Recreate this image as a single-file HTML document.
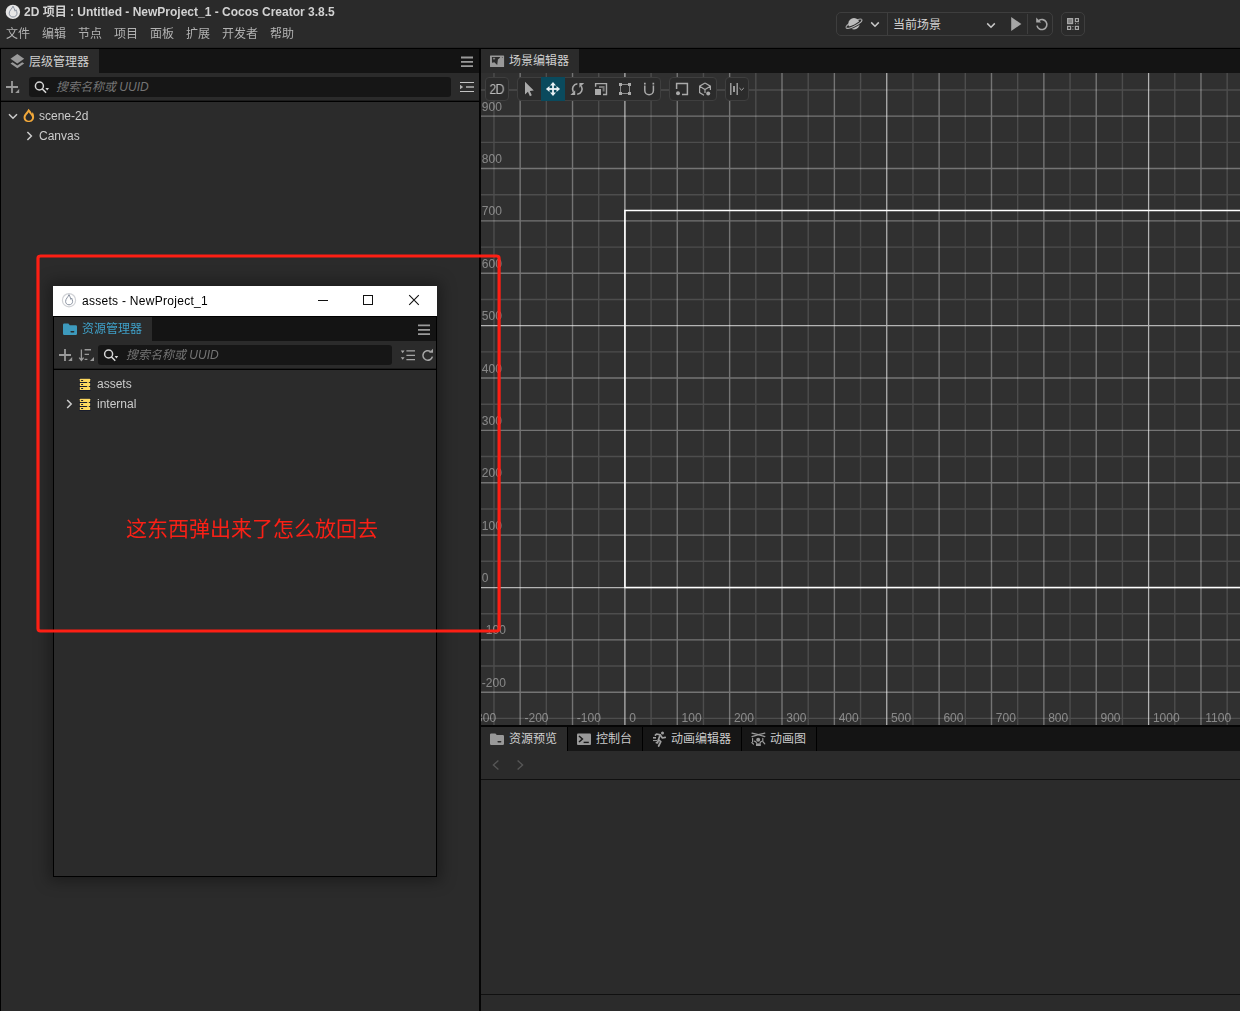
<!DOCTYPE html>
<html lang="zh-CN">
<head>
<meta charset="utf-8">
<title>Cocos Creator</title>
<style>
*{box-sizing:border-box;margin:0;padding:0}
html,body{width:1240px;height:1011px;overflow:hidden;background:#2b2b2b}
body{position:relative;font-family:"Liberation Sans","Noto Sans CJK SC",sans-serif;font-size:12px;color:#ccc}
.abs{position:absolute}
.gs{will-change:transform}
svg{display:block;position:absolute;overflow:visible}
#header{left:0;top:0;width:1240px;height:47px;background:#2a2a2a}
.hbx{top:12px;height:24px;border:1px solid #3e3e3e;border-radius:5px}
#hline{left:0;top:47px;width:1240px;height:2px;background:#000;border-top:1px solid #232323}
#title{left:24px;top:4px;font-weight:bold;font-size:12px;line-height:16px;color:#d2d2d2;white-space:nowrap}
.menu{top:26px;font-size:12px;line-height:16px;color:#b2b2b2;white-space:nowrap}
/* left panel */
#lp{left:0;top:49px;width:479px;height:962px;background:#2b2b2b;border-left:1px solid #000}
.tabbar{background:#141414;height:24px}
.tab{background:#2b2b2b;height:24px;color:#d0d0d0;white-space:nowrap;font-size:12px;line-height:24px}
.itab{top:727px;background:#161616;color:#cacaca}
.search{background:#161616;border-radius:3px;height:20px}
.ph{font-style:italic;color:#747474;font-size:12px;line-height:20px;white-space:nowrap}
.row{font-size:12px;line-height:20px;color:#ccc;white-space:nowrap}
#vdiv{left:479px;top:49px;width:2px;height:962px;background:#050505}
/* scene */
#scene{left:481px;top:73px;width:759px;height:652px;background:#303030;overflow:hidden}
.tbx{background:#2b2b2b;border:1px solid #3f3f3f;border-radius:4px;height:24px;top:77px}
#t2d{left:485px;top:77px;width:24px;height:24px;line-height:24px;text-align:center;font-size:14px;letter-spacing:-.9px;color:#b9b9b9;transform:scaleX(.9);text-indent:-1px}
#hdiv{left:481px;top:725px;width:759px;height:2px;background:#050505}
/* popup */
#win{left:53px;top:286px;width:384px;height:591px;background:#2b2b2b;border:1px solid #000;border-top:none;box-shadow:0 0 14px 4px rgba(0,0,0,.35)}
#wtitle{left:0;top:0;width:384px;height:30px;background:#fff;margin-left:-1px}
#anno{left:126px;top:514px;font-size:21px;line-height:30px;color:#fa2016;white-space:nowrap}
</style>
</head>
<body>
<div id="header" class="abs"></div>
<div id="hline" class="abs"></div>
<div id="title" class="abs gs">2D 项目 : Untitled - NewProject_1 - Cocos Creator 3.8.5</div>
<div class="abs menu gs" style="left:6px">文件</div>
<div class="abs menu gs" style="left:42px">编辑</div>
<div class="abs menu gs" style="left:78px">节点</div>
<div class="abs menu gs" style="left:114px">项目</div>
<div class="abs menu gs" style="left:150px">面板</div>
<div class="abs menu gs" style="left:186px">扩展</div>
<div class="abs menu gs" style="left:222px">开发者</div>
<div class="abs menu gs" style="left:270px">帮助</div>


<!-- HEADER PREVIEW GROUP -->
<div class="abs hbx" style="left:836px;width:217px"></div>
<div class="abs" style="left:887px;top:13px;width:1px;height:22px;background:#3e3e3e"></div>
<div class="abs" style="left:1027px;top:14px;width:1px;height:20px;background:#3e3e3e"></div>
<div class="abs hbx" style="left:1061px;width:24px"></div>
<div class="abs" style="left:893px;top:17px;font-size:12px;line-height:16px;color:#d4d4d4;white-space:nowrap">当前场景</div>

<!-- LEFT PANEL -->
<div id="lp" class="abs">
  <div class="abs tabbar" style="left:0;top:0;width:478px"></div>
  <div class="abs tab" style="left:0;top:0;width:98px;padding-left:28px;line-height:26px">层级管理器</div>
  <div class="abs search" style="left:28px;top:28px;width:422px"></div>
  <div class="abs ph" style="left:55px;top:28px">搜索名称或 UUID</div>
  <div class="abs" style="left:0;top:51px;width:478px;height:2px;background:#000;border-top:1px solid #1c1c1c"></div>
  <div class="abs row gs" style="left:38px;top:57px">scene-2d</div>
  <div class="abs row gs" style="left:38px;top:77px">Canvas</div>
</div>
<div id="vdiv" class="abs"></div>

<!-- SCENE PANEL -->
<div class="abs tabbar" style="left:481px;top:49px;width:759px"></div>
<div class="abs tab" style="left:481px;top:49px;width:98px;padding-left:28px">场景编辑器</div>
<div id="scene" class="abs">
<!--GRIDSTART--><svg id="grid" width="759" height="652" viewBox="0 0 759 652" style="left:0;top:0;will-change:transform">
<path d="M12.97 0V652M65.34 0V652M117.71 0V652M170.08 0V652M222.45 0V652M274.82 0V652M327.19 0V652M379.56 0V652M431.94 0V652M484.31 0V652M536.67 0V652M589.05 0V652M641.41 0V652M693.79 0V652M746.16 0V652M0 645.42H759M0 593.06H759M0 540.68H759M0 488.31H759M0 435.94H759M0 383.57H759M0 331.20H759M0 278.83H759M0 226.46H759M0 174.09H759M0 121.72H759M0 69.35H759M0 16.98H759" stroke="#fff" stroke-opacity=".14" stroke-width="1.4" fill="none"/>
<path d="M39.16 0V652M91.53 0V652M196.27 0V652M248.64 0V652M301.01 0V652M353.38 0V652M458.12 0V652M510.49 0V652M562.86 0V652M615.23 0V652M719.97 0V652M0 619.24H759M0 566.87H759M0 462.13H759M0 409.76H759M0 357.39H759M0 305.02H759M0 200.28H759M0 147.91H759M0 95.54H759M0 43.17H759" stroke="#fff" stroke-opacity=".33" stroke-width="1.4" fill="none"/>
<path d="M143.90 0V652M405.75 0V652M667.60 0V652M0 514.50H759M0 252.65H759" stroke="#fff" stroke-opacity=".64" stroke-width="1.25" fill="none"/>
<path d="M764 137.44H143.90V514.50H764" stroke="#fff" stroke-width="1.6" fill="none"/>
<g font-family="Liberation Sans, sans-serif" font-size="12" fill="#fff" fill-opacity=".42">
<text x="-8.9" y="648.5">-300</text>
<text x="43.5" y="648.5">-200</text>
<text x="95.8" y="648.5">-100</text>
<text x="148.2" y="648.5">0</text>
<text x="200.6" y="648.5">100</text>
<text x="252.9" y="648.5">200</text>
<text x="305.3" y="648.5">300</text>
<text x="357.7" y="648.5">400</text>
<text x="410.1" y="648.5">500</text>
<text x="462.4" y="648.5">600</text>
<text x="514.8" y="648.5">700</text>
<text x="567.2" y="648.5">800</text>
<text x="619.5" y="648.5">900</text>
<text x="671.9" y="648.5">1000</text>
<text x="724.3" y="648.5">1100</text>
<text x="0.8" y="614">-200</text>
<text x="0.8" y="561">-100</text>
<text x="0.8" y="509">0</text>
<text x="0.8" y="457">100</text>
<text x="0.8" y="404">200</text>
<text x="0.8" y="352">300</text>
<text x="0.8" y="300">400</text>
<text x="0.8" y="247">500</text>
<text x="0.8" y="195">600</text>
<text x="0.8" y="142">700</text>
<text x="0.8" y="90">800</text>
<text x="0.8" y="38">900</text>
</g></svg><!--GRIDEND-->
</div>

<!-- SCENE TOOLBAR -->
<div class="abs tbx" style="left:485px;width:24px"></div>
<div class="abs gs" id="t2d">2D</div>
<div class="abs tbx" style="left:517px;width:144px"></div>
<div class="abs" style="left:541px;top:77px;width:24px;height:24px;background:#0a4a5d"></div>
<div class="abs tbx" style="left:669px;width:48px"></div>
<div class="abs tbx" style="left:725px;width:24px"></div>
<svg class="abs" width="1240" height="1011" viewBox="0 0 1240 1011" style="left:0;top:0">
<!-- select arrow -->
<path d="M525 81.8V94.4L527.9 91.8L529.9 96.2L531.8 95.3L529.8 91L533.8 90.6Z" fill="#aaa"/>
<!-- move -->
<g fill="#e9f1f4" stroke="none">
<path d="M553 81.9L556 85.5H550ZM553 96.1L556 92.5H550ZM545.9 89L549.5 86V92ZM560.1 89L556.5 86V92Z"/>
<rect x="552.1" y="85" width="1.8" height="8"/><rect x="549" y="88.1" width="8" height="1.8"/>
</g>
<!-- rotate -->
<g fill="none" stroke="#aaa" stroke-width="1.6">
<path d="M577.4 83.7C573.4 84.2 571.3 88.2 573.3 91.9"/>
<path d="M577.2 94.3C581.2 93.8 583.3 89.8 581.3 86.1"/>
</g>
<path d="M575.2 90.2V95H570.4Z" fill="#aaa"/>
<path d="M579.4 87.8V83H584.2Z" fill="#aaa"/>
<!-- scale -->
<path d="M595.6 86.8V83.6H606.5V94.5H603" fill="none" stroke="#aaa" stroke-width="1.4"/>
<path d="M599 87H603.6V91.4" fill="none" stroke="#777" stroke-width="2"/>
<rect x="595" y="89" width="6" height="6" fill="#aaa"/>
<!-- rect tool -->
<path d="M620.5 84.5H629.5V93.5H620.5Z" fill="none" stroke="#8a8a8a" stroke-width="1"/>
<g fill="#aaa"><rect x="619" y="83" width="3" height="3"/><rect x="628" y="83" width="3" height="3"/><rect x="619" y="92" width="3" height="3"/><rect x="628" y="92" width="3" height="3"/></g>
<!-- snap U -->
<path d="M644.8 85.6V90.4A4.3 4.3 0 0 0 653.4 90.4V85.6" fill="none" stroke="#aaa" stroke-width="1.5"/>
<path d="M644 83.7H645.7M652.5 83.7H654.2" stroke="#aaa" stroke-width="1.7"/>
<!-- pivot -->
<path d="M676.6 89V83.6H687.4V94.4H682" fill="none" stroke="#aaa" stroke-width="1.5"/>
<circle cx="678" cy="93.2" r="2" fill="#aaa"/>
<!-- cube -->
<path d="M705 83L710.4 86.2V90M705 83L699.6 86.2V92.6L704 95.2M699.6 86.2L705 89.6L710.4 86.2M705 89.6V93" fill="none" stroke="#aaa" stroke-width="1.2"/>
<circle cx="708.2" cy="93.4" r="2" fill="#aaa"/>
<!-- align -->
<path d="M730.8 83V95M737.2 83V95" stroke="#aaa" stroke-width="1.3"/>
<path d="M734 86V92" stroke="#aaa" stroke-width="1.8"/>
<path d="M739.4 88L741.6 90.2L743.8 88" fill="none" stroke="#aaa" stroke-width="1"/>
</svg>
<div id="hdiv" class="abs"></div>

<!-- BOTTOM PANEL -->
<div class="abs tabbar" style="left:481px;top:727px;width:759px"></div>
<div class="abs tab" style="left:481px;top:727px;width:86px;padding-left:28px">资源预览</div>
<div class="abs tab itab" style="left:568px;width:74px;padding-left:28px">控制台</div>
<div class="abs tab itab" style="left:643px;width:98px;padding-left:28px">动画编辑器</div>
<div class="abs tab itab" style="left:742px;width:74px;padding-left:28px">动画图</div>
<div class="abs" style="left:567px;top:727px;width:1px;height:24px;background:#000"></div>
<div class="abs" style="left:642px;top:727px;width:1px;height:24px;background:#000"></div>
<div class="abs" style="left:741px;top:727px;width:1px;height:24px;background:#000"></div>
<div class="abs" style="left:816px;top:727px;width:1px;height:24px;background:#000"></div>
<div class="abs" style="left:481px;top:779px;width:759px;height:1px;background:#101010"></div>
<div class="abs" style="left:481px;top:994px;width:759px;height:1px;background:#101010"></div>


<!-- BASE ICONS (page coordinates) -->
<svg class="abs" width="1240" height="1011" viewBox="0 0 1240 1011" style="left:0;top:0">
<!-- app logo -->
<g>
<circle cx="12.9" cy="11.9" r="7.2" fill="#e6e6e6"/>
<path d="M13 6.2C12.3 8.6 9.2 10.4 9.2 13.2C9.2 15.4 10.8 17 13 17C15.4 17 17 15.4 17 13.2C17 11.8 16.4 10.8 16 9.8C15.7 10.4 15.5 10.8 15.1 11.2C14.6 9.4 13.9 7.6 13 6.2Z" fill="none" stroke="#8a92a0" stroke-width="1"/>
</g>
<!-- hierarchy tab icon: layers -->
<path d="M17.3 54L24.2 58.7L17.3 63.4L10.5 58.7Z" fill="#999"/>
<path d="M10.5 63.6L12.5 62.2L17.3 65.5L22.2 62.2L24.2 63.6L17.3 68.3Z" fill="#999"/>
<!-- plus -->
<path d="M6 87H18M12 81V93" stroke="#9a9a9a" stroke-width="1.8" fill="none"/>
<path d="M15.2 93H19.2V89Z" fill="#9a9a9a"/>
<!-- search icon -->
<circle cx="39.4" cy="86" r="4" fill="none" stroke="#d6d6d6" stroke-width="1.5"/>
<path d="M42.3 89L45.6 92.3" stroke="#d6d6d6" stroke-width="1.6" stroke-linecap="round"/>
<path d="M45.4 88H49L47.2 90.4Z" fill="#d6d6d6"/>
<!-- hamburger -->
<path d="M461 57.5H473M461 61.9H473M461 66.2H473" stroke="#9a9a9a" stroke-width="1.8"/>
<!-- expand icon -->
<path d="M460 82.5H474M460 91.5H474" stroke="#c4c4c4" stroke-width="1"/>
<path d="M466 87H474" stroke="#909090" stroke-width="2"/>
<path d="M460 84.8V89.2L463.2 87Z" fill="#b0b0b0"/>
<!-- tree arrows -->
<path d="M9 114.2L13 118.3L17 114.2" fill="none" stroke="#ccc" stroke-width="1.5"/>
<path d="M27.4 132L31.4 136L27.4 140" fill="none" stroke="#ccc" stroke-width="1.5"/>
<!-- scene flame -->
<path fill-rule="evenodd" fill="#f3a93a" d="M28.3 108.8C30.3 110.6 31.4 112 31.9 113.7C32.3 113.3 32.6 112.7 32.7 112.1C33.6 113.6 34.1 115.4 34.1 117.2C34.1 120.2 31.8 122.1 28.8 122.1C25.8 122.1 23.6 120.2 23.6 117.4C23.6 113.8 27.4 112.2 28.3 108.8ZM28.6 112.2C29.7 114 32.1 115.4 32.1 117.6C32.1 119.6 30.6 120.7 28.8 120.7C27 120.7 25.5 119.6 25.5 117.6C25.5 115.4 27.7 114.2 28.6 112.2Z"/>
<!-- header: planet -->
<g>
<g transform="rotate(-27 854 23.7)"><ellipse cx="854" cy="23.7" rx="8.8" ry="2.3" fill="none" stroke="#a2a2a2" stroke-width="1.2"/></g>
<circle cx="854" cy="23.7" r="5.7" fill="#bdbdbd"/>
<g transform="rotate(-27 854 23.7)"><path d="M845.2 23.7A8.8 2.3 0 0 0 862.8 23.7" fill="none" stroke="#2a2a2a" stroke-width="3"/><path d="M845.2 23.7A8.8 2.3 0 0 0 862.8 23.7" fill="none" stroke="#b4b4b4" stroke-width="1.2"/></g>
</g>
<path d="M871.2 22.4L875 26.2L878.8 22.4" fill="none" stroke="#c8c8c8" stroke-width="1.5"/>
<path d="M987.2 23.4L991 27.2L994.8 23.4" fill="none" stroke="#c8c8c8" stroke-width="1.5"/>
<!-- play -->
<path d="M1011.2 17V31L1021.4 24Z" fill="#a6a6a6"/>
<!-- refresh -->
<path d="M1038.8 20.6A5 5 0 1 1 1037 25.6" fill="none" stroke="#a6a6a6" stroke-width="1.6"/>
<path d="M1036.2 17.6V22.6H1041.2Z" fill="#a6a6a6"/>
<!-- qr -->
<g fill="none" stroke="#a6a6a6" stroke-width="1.2">
<rect x="1067.6" y="18.6" width="5" height="5" fill="#808080"/>
<rect x="1075.4" y="18.6" width="3" height="3"/>
<rect x="1067.6" y="26.4" width="3" height="3"/>
<rect x="1075.4" y="26.4" width="3" height="3"/>
</g>
<g fill="#a6a6a6"><rect x="1075" y="23.2" width="1" height="1"/><rect x="1077.6" y="23.2" width="1" height="1"/><rect x="1072.4" y="26" width="1" height="1"/><rect x="1072.4" y="28.8" width="1" height="1"/></g>
<!-- scene tab icon -->
<rect x="490" y="55.4" width="14.1" height="11.6" rx=".6" fill="#999"/>
<path d="M491.9 56.9H500.2L499.6 58.1L497.9 59.5L497.2 65.1L494.3 62.3L492 62.7Z" fill="#2b2b2b"/><path d="M494 57.2L494.5 58.2L495.6 58.6L494.5 59.1L494 60.2L493.5 59.1L492.6 58.6L493.5 58.2Z" fill="#999"/><circle cx="502.4" cy="57.5" r=".6" fill="#5c5c5c"/>
<!-- bottom tabs icons -->
<path d="M490 734.6Q490 733.4 491.2 733.4H495.4L496.8 735H502.8Q504 735 504 736.2V743.8Q504 745 502.8 745H491.2Q490 745 490 743.8Z" fill="#999"/>
<rect x="497.4" y="741" width="4" height="1.6" rx=".8" fill="#2b2b2b"/>
<rect x="577" y="733.4" width="14" height="11.6" rx="1" fill="#999"/>
<path d="M579 736L582.4 739L579 742" fill="none" stroke="#181818" stroke-width="1.5"/>
<path d="M583.6 742.4H588.8" stroke="#181818" stroke-width="1.4"/>
<!-- runner -->
<g fill="none" stroke="#a0a0a0" stroke-width="1.7" stroke-linecap="round" stroke-linejoin="round">
<circle cx="662.5" cy="733" r="1.5" fill="#a0a0a0" stroke="none"/>
<path d="M655.4 735.2L656.6 734L660.2 734.8L658.4 739.8L660.8 741.6L658.6 746"/>
<path d="M658.4 740L657.6 742.8L656.4 742.6"/>
<path d="M660.6 735.4L662.4 738L665.2 737.4"/>
</g>
<path d="M653 737.8H656" stroke="#a0a0a0" stroke-width="1.6"/><path d="M653 740.6H657" stroke="#a0a0a0" stroke-width="1"/>
<!-- anim graph -->
<g fill="none" stroke="#9a9a9a" stroke-width="1.2" stroke-linecap="round">
<circle cx="758.2" cy="739.8" r="2" fill="#9a9a9a" stroke="none"/>
<path d="M752 733.2L758.4 734.6L764.8 736.6M764.8 733.2L758.4 734.6L752 736.6" stroke-width="1.3"/>
<path d="M752.6 738.4V742M762.8 738.4V741"/>
<path d="M754.4 741.2Q756 741.6 756.6 743M762.4 741.2Q760.6 741.6 760 743"/>
<path d="M751.8 742.6L753.4 744M764.8 743.8L763.2 742"/>
<rect x="756" y="743.4" width="4.8" height="2.6" fill="#9a9a9a" stroke="none"/>
</g>
<!-- nav arrows -->
<path d="M498.4 760.4L493.4 765L498.4 769.6M517.6 760.4L522.6 765L517.6 769.6" fill="none" stroke="#555" stroke-width="1.4"/>
</svg>

<!-- POPUP WINDOW -->
<div id="win" class="abs">
  <div id="wtitle" class="abs"></div>
  <div class="abs" style="left:28px;top:7px;font-size:12px;line-height:16px;color:#000;white-space:nowrap;letter-spacing:.28px">assets - NewProject_1</div>
  <div class="abs" style="left:0;top:30px;width:382px;height:1px;background:#000"></div>
  <div class="abs tabbar" style="left:0;top:31px;width:382px;height:24px"></div>
  <div class="abs tab" style="left:0;top:31px;width:98px;height:24px;padding-left:28px;color:#3fa0c8;line-height:24px">资源管理器</div>
  <div class="abs search" style="left:44px;top:59px;width:294px"></div>
  <div class="abs ph" style="left:72px;top:59px">搜索名称或 UUID</div>
  <div class="abs" style="left:0;top:82px;width:382px;height:2px;background:#000;border-top:1px solid #1c1c1c"></div>
  <div class="abs row" style="left:43px;top:88px">assets</div>
  <div class="abs row" style="left:43px;top:108px">internal</div>
</div>

<!-- POPUP ICONS (page coordinates) -->
<svg class="abs" width="1240" height="1011" viewBox="0 0 1240 1011" style="left:0;top:0">
<circle cx="69" cy="300.2" r="6.6" fill="#fff" stroke="#d0d2d6" stroke-width="1.2"/>
<path d="M69 294.6C68.3 297 65.6 298.6 65.6 301.4C65.6 303.4 67 304.8 69 304.8C71.2 304.8 72.6 303.4 72.6 301.4C72.6 300.1 72 299.1 71.7 298.1C71.4 298.7 71.2 299 70.9 299.4C70.4 297.7 69.8 296 69 294.6Z" fill="none" stroke="#8a92a0" stroke-width="1"/>
<!-- window buttons -->
<path d="M318 300.5H328" stroke="#111" stroke-width="1"/>
<rect x="363.5" y="295.5" width="9" height="9" fill="none" stroke="#111" stroke-width="1"/>
<path d="M409.2 295.2L418.8 304.8M418.8 295.2L409.2 304.8" stroke="#111" stroke-width="1.1"/>
<!-- tab folder -->
<path d="M63 324.8Q63 323.6 64.2 323.6H68.4L69.8 325.2H75.8Q77 325.2 77 326.4V333.8Q77 335 75.8 335H64.2Q63 335 63 333.8Z" fill="#3d9abd"/>
<rect x="70.4" y="331" width="4" height="1.6" rx=".8" fill="#2b2b2b"/>
<!-- hamburger -->
<path d="M418 325.4H430M418 329.8H430M418 334.2H430" stroke="#9a9a9a" stroke-width="1.8"/>
<!-- plus -->
<path d="M59 355H71M65 349V361" stroke="#9a9a9a" stroke-width="1.8" fill="none"/>
<path d="M68.2 361H72.2V357Z" fill="#9a9a9a"/>
<!-- sort -->
<path d="M81.4 349.4V360M79.2 357.6L81.4 360.4L83.6 357.6" fill="none" stroke="#9a9a9a" stroke-width="1.3"/>
<path d="M84.6 349.8H91M84.6 354.4H89M84.6 359.4H87.4" stroke="#9a9a9a" stroke-width="1.4"/>
<path d="M90 361H94V357Z" fill="#9a9a9a"/>
<!-- search -->
<circle cx="108.6" cy="354" r="4" fill="none" stroke="#d6d6d6" stroke-width="1.5"/>
<path d="M111.5 357L114.8 360.3" stroke="#d6d6d6" stroke-width="1.6" stroke-linecap="round"/>
<path d="M114.6 356H118.2L116.4 358.4Z" fill="#d6d6d6"/>
<!-- list collapse -->
<path d="M400.8 350.6H404.6L402.7 353.2ZM400.8 357.2H404.6L402.7 359.8Z" fill="#a6a6a6"/>
<path d="M406.4 350.9H415M406.4 355.3H415M406.4 359.7H415" stroke="#a6a6a6" stroke-width="1.3"/>
<!-- refresh -->
<path d="M430.6 351.6A4.8 4.8 0 1 0 432.4 356.6" fill="none" stroke="#a6a6a6" stroke-width="1.5"/>
<path d="M429 352.8H433V348.8Z" fill="#a6a6a6"/>
<!-- db icons -->
<rect x="79" y="378" width="12" height="13" rx="1" fill="#181c2c"/><g fill="#fdd85e"><rect x="79.8" y="378.8" width="10.4" height="3.1" rx=".4"/><rect x="79.8" y="382.9" width="10.4" height="3.1" rx=".4"/><rect x="79.8" y="387" width="10.4" height="3.1" rx=".4"/><rect x="87.2" y="381" width="1.6" height="7"/></g><g fill="#141828"><rect x="81" y="379.9" width="2.2" height="1" rx=".5"/><rect x="81" y="384" width="2.2" height="1" rx=".5"/><rect x="81" y="388" width="2.2" height="1" rx=".5"/></g>
<rect x="79" y="398" width="12" height="13" rx="1" fill="#181c2c"/><g fill="#fdd85e"><rect x="79.8" y="398.8" width="10.4" height="3.1" rx=".4"/><rect x="79.8" y="402.9" width="10.4" height="3.1" rx=".4"/><rect x="79.8" y="407" width="10.4" height="3.1" rx=".4"/><rect x="87.2" y="401" width="1.6" height="7"/></g><g fill="#141828"><rect x="81" y="399.9" width="2.2" height="1" rx=".5"/><rect x="81" y="404" width="2.2" height="1" rx=".5"/><rect x="81" y="408" width="2.2" height="1" rx=".5"/></g>
<path d="M67.2 400L71.2 404L67.2 408" fill="none" stroke="#ccc" stroke-width="1.5"/>
</svg>

<svg class="abs" width="1240" height="1011" viewBox="0 0 1240 1011" style="left:0;top:0"><rect x="38" y="256" width="461.1" height="375" rx="2.5" fill="none" stroke="#fd1f14" stroke-width="3.2"/></svg>
<div id="anno" class="abs gs">这东西弹出来了怎么放回去</div>
</body>
</html>
